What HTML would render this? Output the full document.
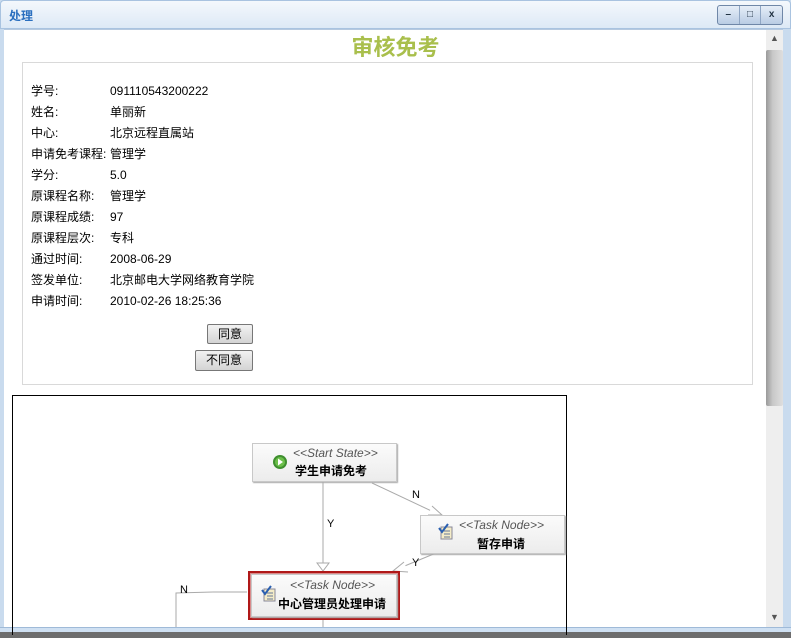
<!DOCTYPE html>
<html><head><meta charset="utf-8"><style>
*{margin:0;padding:0;box-sizing:border-box}
body{width:791px;height:638px;overflow:hidden;background:#c9dbee;font-family:"Liberation Sans","Noto Sans CJK SC",sans-serif;font-size:12px;color:#000;position:relative}
.abs{position:absolute}
.title{left:0;top:0;width:791px;height:29px;background:linear-gradient(#f4f8fc,#dde9f6);border:1px solid #a9c3e0;border-radius:4px 4px 0 0}
.ttxt{left:9px;top:7px;font-size:12px;font-weight:bold;color:#2a6fbf}
.btns{left:717px;top:5px;width:66px;height:20px;border:1px solid #6f87a8;border-radius:3px;background:linear-gradient(#e6eef8,#b9cce4);display:flex}
.btns div{flex:1;border-right:1px solid #8fa6c4;text-align:center;font-size:10px;line-height:18px;color:#234;font-weight:bold}
.btns div:last-child{border:none}
.content{left:4px;top:29px;width:779px;height:598px;background:#fff;border-top:1px solid #b6c9df;overflow:hidden}
.bottom{left:0;top:627px;width:791px;height:5px;background:#cfe0f2;border-top:1px solid #9fbad8}
.dark{left:0;top:632px;width:791px;height:6px;background:#6d6d6d}
.sb{left:766px;top:30px;width:17px;height:597px;background:#eeeeee}
.thumb{left:766px;top:50px;width:17px;height:356px;background:linear-gradient(90deg,#9a9a9a,#c9c9c9 40%,#dedede);border-radius:2px}
.h1{left:0;width:791px;top:30px;text-align:center;font-size:22px;font-weight:bold;color:#a9bf4c}
.box{left:22px;top:62px;width:731px;height:323px;border:1px solid #d9d9d9}
.row,.val{font-size:12px;height:16px;line-height:16px;white-space:nowrap}
.row{left:31px}
.val{left:110px}
.bt{border:1px solid #777;border-radius:2px;background:linear-gradient(#f2f2f2,#d4d4d4);text-align:center;font-size:12px;line-height:18px}
.diag{left:12px;top:395px;width:555px;height:240px;border:1px solid #000;border-bottom:none}
.node{border:1px solid #c8c8c8;background:linear-gradient(#fbfbfb,#ececec);box-shadow:1px 1px 1px #aaa}
.st{font-style:italic;color:#555;font-size:12px;position:absolute}
.nm{font-weight:bold;font-size:12px;position:absolute}
</style></head><body>
<div class="abs title"></div>
<div class="abs ttxt">处理</div>
<div class="abs btns"><div>–</div><div>□</div><div>x</div></div>
<div class="abs content"></div>
<div class="abs sb"></div>
<div class="abs" style="left:770px;top:33px;font-size:9px;color:#555">▲</div>
<div class="abs thumb"></div>
<div class="abs" style="left:770px;top:612px;font-size:9px;color:#555">▼</div>
<div class="abs bottom"></div>
<div class="abs dark"></div>
<div class="abs h1">审核免考</div>
<div class="abs box"></div>
<div class="abs row" style="top:83px">学号:</div><div class="abs val" style="top:83px">091110543200222</div>
<div class="abs row" style="top:104px">姓名:</div><div class="abs val" style="top:104px">单丽新</div>
<div class="abs row" style="top:125px">中心:</div><div class="abs val" style="top:125px">北京远程直属站</div>
<div class="abs row" style="top:146px">申请免考课程:</div><div class="abs val" style="top:146px">管理学</div>
<div class="abs row" style="top:167px">学分:</div><div class="abs val" style="top:167px">5.0</div>
<div class="abs row" style="top:188px">原课程名称:</div><div class="abs val" style="top:188px">管理学</div>
<div class="abs row" style="top:209px">原课程成绩:</div><div class="abs val" style="top:209px">97</div>
<div class="abs row" style="top:230px">原课程层次:</div><div class="abs val" style="top:230px">专科</div>
<div class="abs row" style="top:251px">通过时间:</div><div class="abs val" style="top:251px">2008-06-29</div>
<div class="abs row" style="top:272px">签发单位:</div><div class="abs val" style="top:272px">北京邮电大学网络教育学院</div>
<div class="abs row" style="top:293px">申请时间:</div><div class="abs val" style="top:293px">2010-02-26 18:25:36</div>
<div class="abs bt" style="left:207px;top:324px;width:46px;height:20px">同意</div>
<div class="abs bt" style="left:195px;top:350px;width:58px;height:21px">不同意</div>
<div class="abs diag"></div>
<svg class="abs" style="left:0;top:0" width="791" height="638">
<g stroke="#aaa" fill="none" stroke-width="1">
<line x1="323" y1="482" x2="323" y2="570"/>
<path d="M317 563 L323 571 L329 563 Z" fill="#fff"/>
<line x1="372" y1="483" x2="440" y2="515"/>
<path d="M432 506 L442 515 L428 515" fill="#fff"/>
<line x1="436" y1="553" x2="395" y2="570"/>
<path d="M404 562 L393 571 L408 572" fill="#fff"/>
<polyline points="176,627 176,593 213,592 247,592"/>
<line x1="323" y1="619" x2="323" y2="627"/>
</g>
<g font-family="Liberation Sans" font-size="11" fill="#000">
<text x="412" y="498">N</text><text x="327" y="527">Y</text><text x="412" y="566">Y</text><text x="180" y="593">N</text>
</g>
</svg>
<div class="abs node" style="left:252px;top:443px;width:145px;height:39px">
<svg class="abs" style="left:19px;top:10px" width="16" height="16"><circle cx="8" cy="8" r="7" fill="#3f8f2f"/><circle cx="8" cy="8" r="5" fill="#6cbf4a"/><path d="M6 4.5 L11 8 L6 11.5Z" fill="#fff"/></svg>
<span class="st" style="left:40px;top:2px">&lt;&lt;Start State&gt;&gt;</span>
<span class="nm" style="left:42px;top:18px">学生申请免考</span></div>
<div class="abs node" style="left:420px;top:515px;width:145px;height:39px">
<svg class="abs" style="left:17px;top:6px" width="16" height="18"><rect x="3" y="5" width="11" height="12" fill="#f4ecc8" stroke="#889"/><path d="M1 6 L4 10 L10 2" stroke="#2a5fb0" stroke-width="2" fill="none"/><path d="M6 9h6M6 12h6M6 15h6" stroke="#679"/></svg>
<span class="st" style="left:38px;top:2px">&lt;&lt;Task Node&gt;&gt;</span>
<span class="nm" style="left:56px;top:19px">暂存申请</span></div>
<div class="abs" style="left:248px;top:571px;width:152px;height:49px;border:2px solid #b01818;background:#d98a8a;padding:1px">
<div class="node" style="position:relative;width:100%;height:100%">
<svg class="abs" style="left:9px;top:9px" width="16" height="18"><rect x="3" y="5" width="11" height="12" fill="#f4ecc8" stroke="#889"/><path d="M1 6 L4 10 L10 2" stroke="#2a5fb0" stroke-width="2" fill="none"/><path d="M6 9h6M6 12h6M6 15h6" stroke="#679"/></svg>
<span class="st" style="left:38px;top:3px">&lt;&lt;Task Node&gt;&gt;</span>
<span class="nm" style="left:26px;top:20px">中心管理员处理申请</span></div></div>
</body></html>
